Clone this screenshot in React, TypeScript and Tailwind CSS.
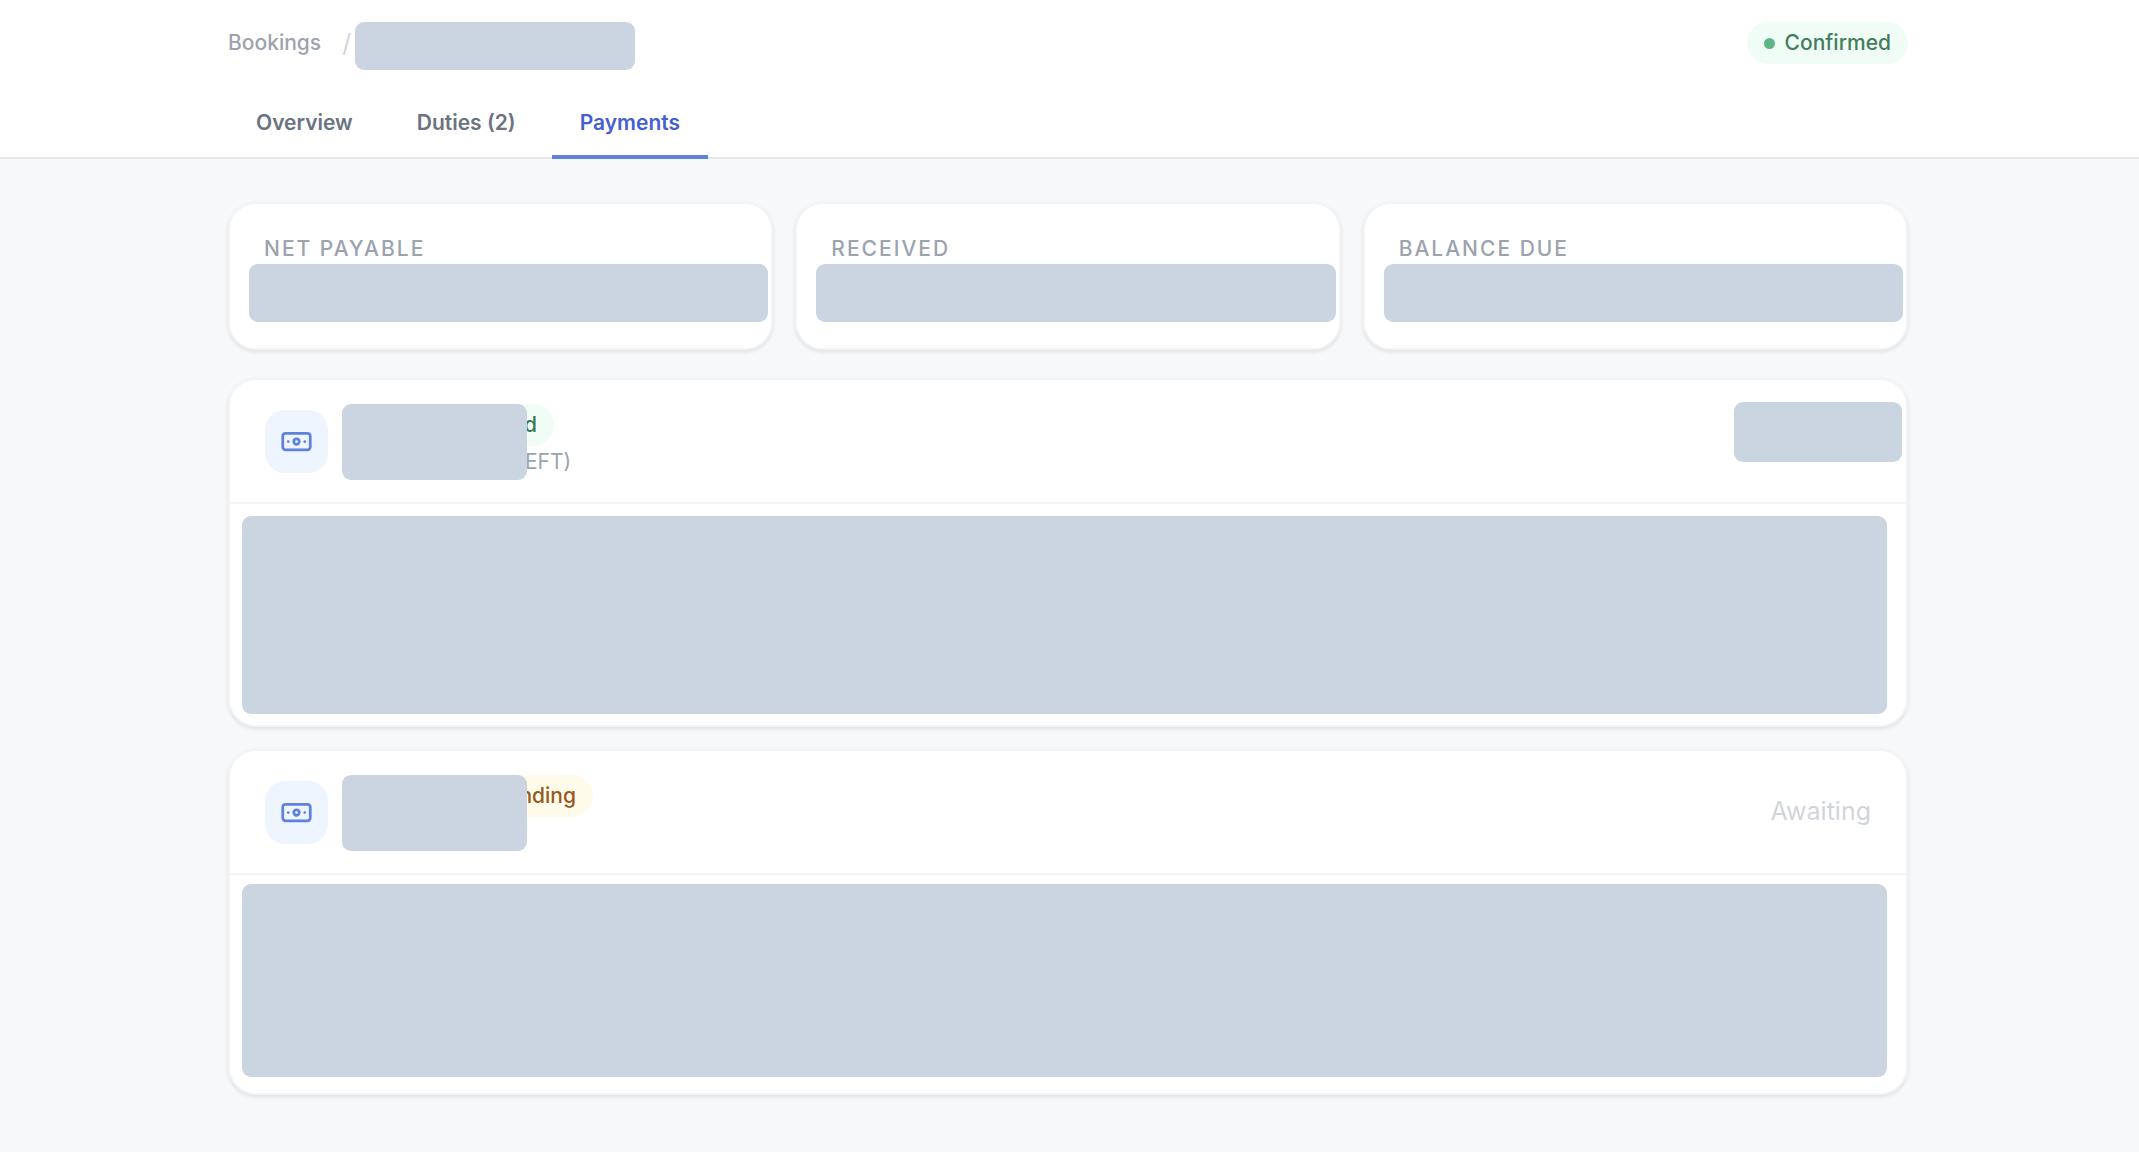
import React, { useState } from 'react';
import { Banknote } from 'lucide-react';

interface Payment {
  id: string;
  badge: string;
  badgeStyle: string;
  badgeWidth: string;
  method?: string;
  awaiting?: boolean;
  body: string;
  block: string;
}

const tabs = ['Overview', 'Duties (2)', 'Payments'];

const summary = ['Net payable', 'Received', 'Balance due'];

const payments: Payment[] = [
  {
    id: 'first',
    badge: 'd',
    badgeStyle: 'bg-[#f0fdf6] text-[#3a7854]',
    badgeWidth: 'w-[212px]',
    method: 'EFT)',
    body: 'pt-3 pb-[11px]',
    block: 'h-[198px]',
  },
  {
    id: 'second',
    badge: 'nding',
    badgeStyle: 'bg-[#fefbea] text-[#96591f]',
    badgeWidth: 'w-[251px]',
    awaiting: true,
    body: 'pt-[9px] pb-4',
    block: 'h-[193px]',
  },
];

const cardStyle = 'bg-white border-2 border-[#f3f4f6] rounded-[28px] shadow-[0_2px_4px_rgba(0,0,0,0.10)]';

function Redacted({ className }: { className: string }) {
  return <div className={`bg-[#cbd5e1] rounded-[9px] ${className}`} />;
}

function PaymentCard({ payment }: { payment: Payment }) {
  return (
    <article className={cardStyle}>
      <div className="flex justify-between border-b-2 border-[#f3f4f6] pl-[35px]">
        <div className="flex items-center gap-[14px] py-6">
          <div className="w-[63px] h-[63px] rounded-[20px] bg-[#eff5ff] flex items-center justify-center">
            <Banknote size={33} className="text-[#5f82dc]" />
          </div>
          <div className="relative h-[74px]">
            <div className={`h-[42px] rounded-full flex items-center justify-end pr-[17px] text-[21px] font-medium ${payment.badgeStyle} ${payment.badgeWidth}`}>
              {payment.badge}
            </div>
            {payment.method && (
              <p className="pl-[183px] text-[21px] leading-8 text-[#9ca3af]">{payment.method}</p>
            )}
            <Redacted className="absolute left-0 top-0 w-[185px] h-[76px]" />
          </div>
        </div>
        {payment.awaiting ? (
          <span className="self-center pr-[35px] text-[25px] text-[#d1d5db]">Awaiting</span>
        ) : (
          <Redacted className="w-[168px] h-[60px] mt-[22px] mr-1" />
        )}
      </div>
      <div className={`pl-3 pr-[19px] ${payment.body}`}>
        <Redacted className={payment.block} />
      </div>
    </article>
  );
}

export default function App() {
  const [activeTab, setActiveTab] = useState('Payments');

  return (
    <div className="min-h-screen bg-[#f7f8fa] font-['Inter',sans-serif]">
      <header className="bg-white border-b-2 border-[#e5e7eb] pr-[3px]">
        <div className="max-w-[1680px] mx-auto">
          <div className="flex items-start justify-between pt-[22px]">
            <nav aria-label="Breadcrumb" className="flex items-start">
              <a href="#bookings" className="text-[21px] leading-[42px] text-[#9ca3af] font-medium">
                Bookings
              </a>
              <span className="pl-[21px] pr-1 text-[25px] leading-[42px] text-[#d1d5db]">/</span>
              <Redacted className="w-[280px] h-12" />
            </nav>
            <span className="h-[42px] px-[17px] rounded-full bg-[#f0fdf6] text-[#437d5d] text-[21px] font-medium flex items-center gap-[10px]">
              <span className="w-[11px] h-[11px] rounded-full bg-[#5eb487]" />
              Confirmed
            </span>
          </div>

          <div role="tablist" className="flex gap-2 mt-[18px] -mb-[2px]">
            {tabs.map(tab => (
              <button
                key={tab}
                role="tab"
                aria-selected={activeTab === tab}
                onClick={() => setActiveTab(tab)}
                className={`px-7 pt-[19px] pb-[16px] text-[21px] leading-8 font-semibold border-b-4 cursor-pointer ${
                  activeTab === tab ? 'border-[#5f82dc] text-[#4560d0]' : 'border-transparent text-[#6b7280]'
                }`}
              >
                {tab}
              </button>
            ))}
          </div>
        </div>
      </header>

      <main className="pt-[43px] pb-14 pr-[3px]">
        <div className="max-w-[1680px] mx-auto">
          <section className="grid grid-cols-3 gap-[22px]">
            {summary.map(label => (
              <div key={label} className={`${cardStyle} pt-[29px] pb-[26px]`}>
                <h2 className="pl-[34px] text-[21px] leading-[31px] font-medium uppercase tracking-[2px] text-[#9ca3af]">
                  {label}
                </h2>
                <Redacted className="h-[58px] ml-[19px] mr-[3px]" />
              </div>
            ))}
          </section>

          <section className="mt-7 flex flex-col gap-[22px]">
            {payments.map(payment => (
              <PaymentCard key={payment.id} payment={payment} />
            ))}
          </section>
        </div>
      </main>
    </div>
  );
}
